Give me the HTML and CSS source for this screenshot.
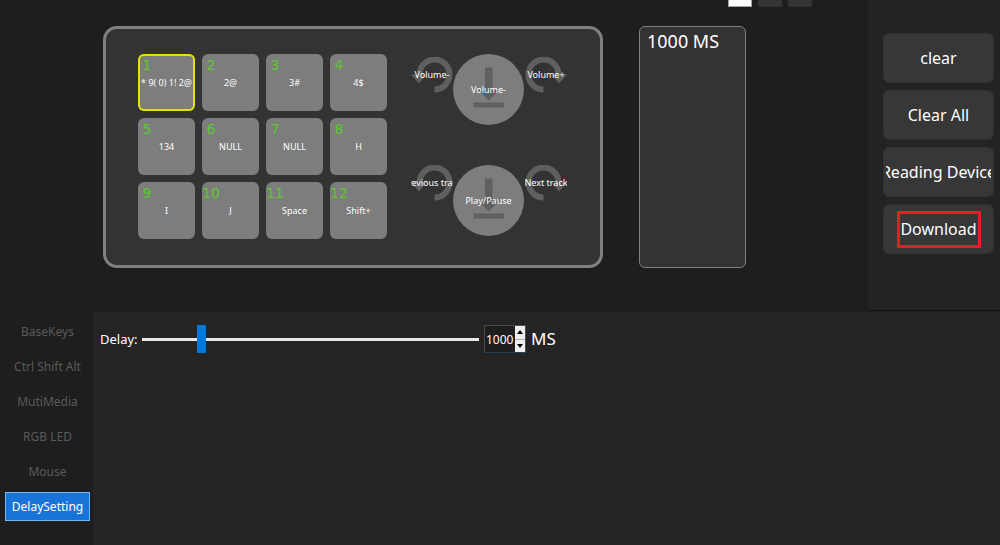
FILE: index.html
```html
<!DOCTYPE html>
<html lang="en">
<head>
<meta charset="utf-8">
<title>Macro keypad</title>
<link rel="stylesheet" href="styles.css">
</head>
<body>
<svg class="defs" aria-hidden="true">
  <symbol id="turn" viewBox="0 0 42 36">
    <path d="M23.500 32.500A15 15 0 1 0 8.500 18" fill="none" stroke="#5f5f5f" stroke-width="6"/>
    <path d="M0 17.500H15.500L8 26.500Z" fill="#5f5f5f"/>
  </symbol>
  <symbol id="press" viewBox="0 0 71 71">
    <path d="M32 13.500H39.500V36H46L35.700 46.500L25.500 36H32ZM20.500 48.500H51V53.500H20.500Z" fill="#606060"/>
  </symbol>
</svg>
<div class="top">
  <main class="main">
    <div class="layers">
      <button class="layer active" aria-label="Layer 1"></button>
      <button class="layer" aria-label="Layer 2"></button>
      <button class="layer" aria-label="Layer 3"></button>
    </div>
    <div class="work">
      <section class="device">
        <div class="keys">
          <button class="key selected"><span class="num">1</span><span class="label">* 9( 0) 1! 2@</span></button>
          <button class="key"><span class="num">2</span><span class="label">2@</span></button>
          <button class="key"><span class="num">3</span><span class="label">3#</span></button>
          <button class="key"><span class="num">4</span><span class="label">4$</span></button>
          <button class="key"><span class="num">5</span><span class="label">134</span></button>
          <button class="key"><span class="num">6</span><span class="label">NULL</span></button>
          <button class="key"><span class="num">7</span><span class="label">NULL</span></button>
          <button class="key"><span class="num">8</span><span class="label">H</span></button>
          <button class="key"><span class="num">9</span><span class="label">I</span></button>
          <button class="key"><span class="num">10</span><span class="label">J</span></button>
          <button class="key"><span class="num">11</span><span class="label">Space</span></button>
          <button class="key"><span class="num">12</span><span class="label">Shift+</span></button>
        </div>
        <div class="knobs">
          <div class="knob upper">
            <button class="turn"><svg><use href="#turn"/></svg><span class="label">Volume-</span></button>
            <button class="press"><svg><use href="#press"/></svg><span class="label">Volume-</span></button>
            <button class="turn right"><svg><use href="#turn"/></svg><span class="label">Volume+</span></button>
          </div>
          <div class="knob">
            <button class="turn"><svg><use href="#turn"/></svg><span class="label">Previous track</span></button>
            <button class="press"><svg><use href="#press"/></svg><span class="label">Play/Pause</span></button>
            <button class="turn right"><svg><use href="#turn"/></svg><span class="label">Next track</span></button>
          </div>
        </div>
      </section>
      <ul class="steps"><li>1000 MS</li></ul>
    </div>
  </main>
  <aside class="actions">
    <button class="action"><span class="label">clear</span></button>
    <button class="action"><span class="label">Clear All</span></button>
    <button class="action"><span class="label">Reading Device</span></button>
    <button class="action marked"><span class="label">Download</span></button>
  </aside>
</div>
<div class="bottom">
  <nav class="tabs">
    <button class="tab">BaseKeys</button>
    <button class="tab">Ctrl Shift Alt</button>
    <button class="tab">MutiMedia</button>
    <button class="tab">RGB LED</button>
    <button class="tab">Mouse</button>
    <button class="tab current">DelaySetting</button>
  </nav>
  <section class="settings">
    <div class="delay">
      <label for="delay">Delay:</label>
      <input class="slider" id="delay" type="range" min="0" max="6000" value="1000">
      <div class="spin">
        <input class="value" type="text" value="1000" aria-label="Delay in milliseconds">
        <div class="steppers">
          <button class="step" aria-label="Increase"><svg viewBox="0 0 6 4"><path d="M0 4L3 0L6 4Z"/></svg></button>
          <button class="step" aria-label="Decrease"><svg viewBox="0 0 6 4"><path d="M0 0L3 4L6 0Z"/></svg></button>
        </div>
      </div>
      <span class="unit">MS</span>
    </div>
  </section>
</div>
</body>
</html>
```
FILE: styles.css
```css
* { box-sizing: border-box; }

body {
  margin: 0;
  min-height: 100vh;
  display: flex;
  flex-direction: column;
  background: #1e1e1e;
  color: #fff;
  font-family: "Noto Sans", "Open Sans", sans-serif;
}

button {
  margin: 0;
  padding: 0;
  border: 0;
  background: none;
  color: inherit;
  font: inherit;
}

.defs { display: none; }

.top { display: flex; }

.main { flex: 1; padding-bottom: 44px; }

.layers {
  display: flex;
  justify-content: flex-end;
  gap: 6px;
  padding-right: 58px;
}

.layer {
  width: 24px;
  height: 7px;
  background: #353535;
  border-bottom: 1px solid #2c2c2c;
}

.layer.active {
  background: #fff;
  border: 1px solid #a0a0a0;
  border-top: 0;
}

.work {
  display: flex;
  gap: 36px;
  padding: 19px 0 0 103px;
}

.device {
  display: flex;
  gap: 24px;
  padding: 25px 33px 26px 32px;
  border: 3px solid #808080;
  border-radius: 14px;
  background: #333;
}

.keys {
  display: grid;
  grid-template-columns: repeat(4, 57px);
  grid-auto-rows: 57px;
  gap: 7px;
}

.key {
  position: relative;
  display: flex;
  align-items: center;
  justify-content: center;
  overflow: hidden;
  border-radius: 6px;
  background: #7d7d7d;
}

.key.selected { box-shadow: inset 0 0 0 2px #e3e300; }

.num {
  position: absolute;
  top: 2px;
  left: 0;
  width: 18px;
  color: #5fc82d;
  font: 14px/18px "DejaVu Sans", sans-serif;
  text-align: center;
}

.label { white-space: nowrap; }

.key .label, .knob .label { font-size: 9px; line-height: 12px; }

.knobs {
  display: flex;
  flex-direction: column;
  gap: 40px;
}

.knob { display: flex; }

.knob button {
  display: grid;
  place-items: center;
  place-content: center;
  overflow: hidden;
}

.knob svg, .knob .label { grid-area: 1 / 1; }

.knob .label { z-index: 1; }

.turn, .turn svg { width: 42px; height: 36px; }

.upper .turn { margin-top: 3px; }

.turn.right { margin-left: 1px; }

.turn.right svg { transform: scaleX(-1); }

.press {
  border-radius: 50%;
  background: #7d7d7d;
}

.press, .press svg { width: 71px; height: 71px; }

.steps {
  width: 107px;
  margin: 0;
  padding: 2px 7px;
  border: 1px solid #808080;
  border-radius: 6px;
  background: #333;
  font-size: 18px;
  line-height: 24px;
  list-style: none;
}

.actions {
  display: flex;
  flex-direction: column;
  gap: 7px;
  width: 131px;
  margin-bottom: 1px;
  padding: 33px 6px 0 13px;
  border-left: 1px solid #272727;
  border-bottom: 1px solid #101010;
  background: #232323;
}

.layers { padding-right: 57px; }

.action {
  position: relative;
  display: flex;
  height: 50px;
  align-items: center;
  padding: 0 2px;
  border: 1px solid #2c3038;
  border-radius: 6px;
  background: #373737;
  font-size: 16px;
  line-height: 24px;
}

.action .label {
  display: flex;
  flex: 1;
  min-width: 0;
  justify-content: center;
  overflow: hidden;
}

.marked::after {
  content: "";
  position: absolute;
  inset: 6px 12px 5px 13px;
  border: 3px solid #ec1c24;
}

.bottom { display: flex; flex: 1; }

.tabs {
  display: flex;
  flex-direction: column;
  align-self: flex-start;
  gap: 6px;
  width: 93px;
  padding: 5px 3px 0 5px;
}

.tab {
  height: 29px;
  border: 1px solid transparent;
  color: #5a5a5a;
  font-size: 12px;
  line-height: 16px;
  white-space: nowrap;
}

.tab.current {
  border-color: #6db8f5;
  background: #1874d8;
  color: #fff;
}

.settings {
  flex: 1;
  padding: 13px 7px;
  background: #242424;
}

.delay { display: flex; align-items: center; }

.delay label {
  width: 42px;
  font-size: 13px;
  line-height: 28px;
}

.slider {
  width: 337px;
  height: 28px;
  margin: 0;
  appearance: none;
  background: linear-gradient(#e8e8e8, #e8e8e8) center / 100% 3px no-repeat;
}

.slider::-webkit-slider-thumb {
  appearance: none;
  width: 9px;
  height: 28px;
  background: #0078d7;
}

.spin {
  display: flex;
  width: 42px;
  height: 28px;
  margin: 0 5px;
  border: 1px solid #4a4a4a;
  border-bottom-color: #24405a;
}

.value {
  flex: 1;
  min-width: 0;
  padding: 0 0 0 1px;
  border: 0;
  background: #1e1e1e;
  color: #fff;
  font: 12px "Noto Sans", "Open Sans", sans-serif;
}

.steppers {
  display: flex;
  flex-direction: column;
  gap: 1px;
  width: 10px;
  background: #b0b0b0;
}

.step {
  display: grid;
  flex: 1;
  place-items: center;
  background: #eee;
}

.step svg { width: 6px; height: 4px; }

.unit { font-size: 17px; line-height: 28px; }
```
